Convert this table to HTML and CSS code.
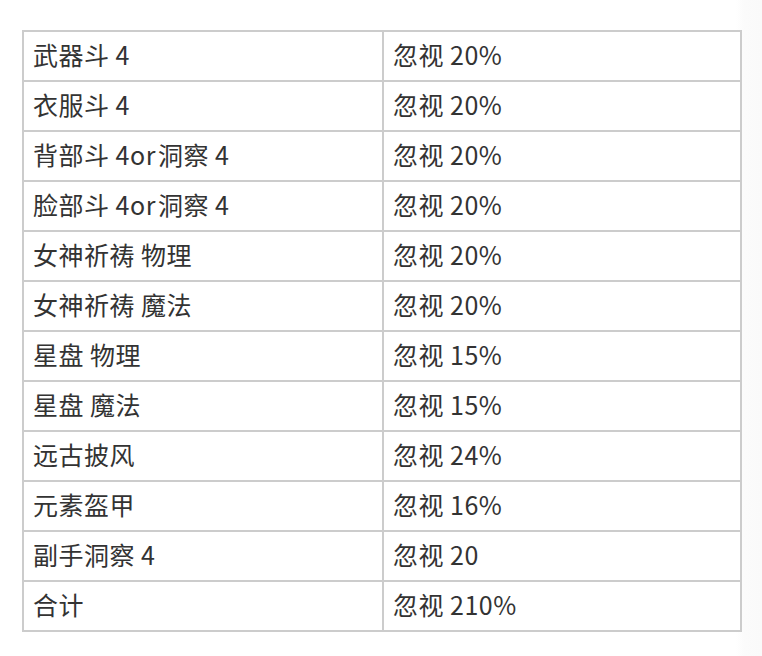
FILE: index.html
```html
<!DOCTYPE html>
<html lang="zh-CN">
<head>
<meta charset="utf-8">
<title>忽视</title>
<link rel="stylesheet" href="styles.css">
</head>
<body>
<table class="grid">
  <tbody>
    <tr><td>武器斗 4</td><td>忽视 20%</td></tr>
    <tr><td>衣服斗 4</td><td>忽视 20%</td></tr>
    <tr><td>背部斗 4or&#8202;洞察 4</td><td>忽视 20%</td></tr>
    <tr><td>脸部斗 4or&#8202;洞察 4</td><td>忽视 20%</td></tr>
    <tr><td>女神祈祷 物理</td><td>忽视 20%</td></tr>
    <tr><td>女神祈祷 魔法</td><td>忽视 20%</td></tr>
    <tr><td>星盘 物理</td><td>忽视 15%</td></tr>
    <tr><td>星盘 魔法</td><td>忽视 15%</td></tr>
    <tr><td>远古披风</td><td>忽视 24%</td></tr>
    <tr><td>元素盔甲</td><td>忽视 16%</td></tr>
    <tr><td>副手洞察 4</td><td>忽视 20</td></tr>
    <tr><td>合计</td><td>忽视 210%</td></tr>
  </tbody>
</table>
</body>
</html>
```

FILE: styles.css
```css
html, body {
  margin: 0;
  padding: 0;
}
body {
  background: linear-gradient(to right, #ffffff 0, #ffffff 736px, #fbfbfb 744px, #fafafa 100%);
  min-height: 656px;
  padding: 30px 0 0 22px;
  box-sizing: border-box;
  font-family: "Noto Sans CJK SC", "Noto Sans", sans-serif;
  color: #333333;
}
.grid {
  border-collapse: collapse;
  width: 720px;
  table-layout: fixed;
  background: #ffffff;
}
.grid td {
  border: 2px solid #cccccc;
  height: 48px;
  box-sizing: border-box;
  padding: 0 10px 4px 9px;
  font-size: 25px;
  letter-spacing: 0.5px;
  line-height: 44px;
  vertical-align: middle;
  white-space: nowrap;
}
.grid td:first-child {
  width: 360px;
}
```
